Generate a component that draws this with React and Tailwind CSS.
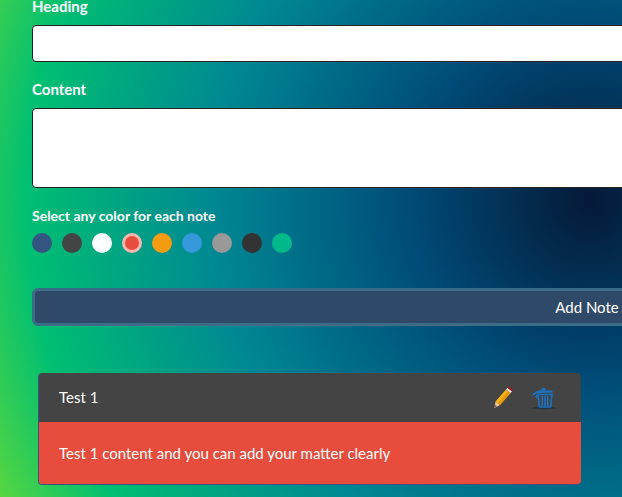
const colors = [
  'bg-[#34557f]',
  'bg-[#444444]',
  'bg-white',
  'bg-[#e74c3c] border-[3px] border-[#f4b6b0]',
  'bg-[#f39c12]',
  'bg-[#3498db]',
  'bg-[#999999]',
  'bg-[#333333]',
  'bg-[#00b98a]',
]

function PencilIcon() {
  return (
    <svg width="22" height="24" viewBox="0 0 22 24" className="shrink-0">
      <path d="M2.5 22 L3.5 15.5 L8 19 Z" fill="#eec3a0" />
      <path d="M2.5 22 L3 18.8 L5 20.4 Z" fill="#8a6a58" />
      <path d="M3.5 15.5 L14 3.5 L18.5 7 L8 19 Z" fill="#f7b614" />
      <path d="M6 16.8 L15.5 5.2 L18.5 7 L8 19 Z" fill="#e89a0c" />
      <path d="M14 3.5 L15.5 1.8 L20 5.3 L18.5 7 Z" fill="#e8e4dc" />
      <path d="M15.5 1.8 L16.8 0.5 L21 3.5 L20 5.3 Z" fill="#a5161c" />
    </svg>
  )
}

function TrashIcon() {
  return (
    <svg width="26" height="24" viewBox="0 0 26 24" className="shrink-0">
      <ellipse cx="13" cy="22" rx="12" ry="1.2" fill="#26323c" />
      <path d="M7 8.5 H21 L19.5 21 H8.5 Z" fill="none" stroke="#1a73c4" strokeWidth="1.6" />
      <path d="M11.3 10 V20 M14 10 V20 M16.7 10 V20" stroke="#1a73c4" strokeWidth="1.5" />
      <path d="M1 10 C2 6.5 6 4.5 11 4.6 L21 4.6 L22 6.5 L9 7 C6 7 4 8 1 10 Z" fill="#1a73c4" />
      <path d="M10 4.6 L11 2 H14 L15 4.6 Z" fill="#1a73c4" />
      <path d="M4 11 L6 8 L7 13 Z" fill="#1a73c4" />
    </svg>
  )
}

export default function App() {
  return (
    <div className="h-[497px] w-[622px] overflow-hidden bg-[radial-gradient(circle_750px_at_590px_200px,#051937,#004d7a,#008793,#00bf72,#a8eb12)] font-['Lato','Open_Sans',sans-serif] text-white">
      <div className="-mt-[3px] w-[1142px] pl-8">
        <label className="block h-[28px] text-[15px] leading-[18px] font-bold">Heading</label>
        <input className="block h-[37px] w-full rounded border border-[#222] bg-white" />
        <label className="mt-[18px] block h-[28px] text-[15px] leading-[18px] font-bold">Content</label>
        <textarea className="block h-[80px] w-full resize-none rounded border border-[#222] bg-white" />
        <p className="mt-[19px] text-sm leading-[17px] font-bold">Select any color for each note</p>
        <div className="mt-[9px] flex gap-[10px]">
          {colors.map((c, i) => (
            <span key={i} className={`h-5 w-5 rounded-full ${c}`} />
          ))}
        </div>
        <button className="mt-[35px] h-[38px] w-full rounded-md border-[3px] border-[#3b6c88] bg-[#2f4a68] text-[15px]">
          Add Note
        </button>
      </div>
      <div className="mt-[47px] ml-[38px] w-[543px] overflow-hidden rounded border border-[#34557f] border-t-0 border-r-0">
        <div className="flex h-[49px] items-center justify-between bg-[#444444] pr-6 pl-5">
          <span className="text-[15px]">Test 1</span>
          <div className="flex items-center gap-[17px]">
            <PencilIcon />
            <TrashIcon />
          </div>
        </div>
        <div className="flex h-[62px] items-center bg-[#e74c3c] px-5 text-[15px]">
          Test 1 content and you can add your matter clearly
        </div>
      </div>
    </div>
  )
}
